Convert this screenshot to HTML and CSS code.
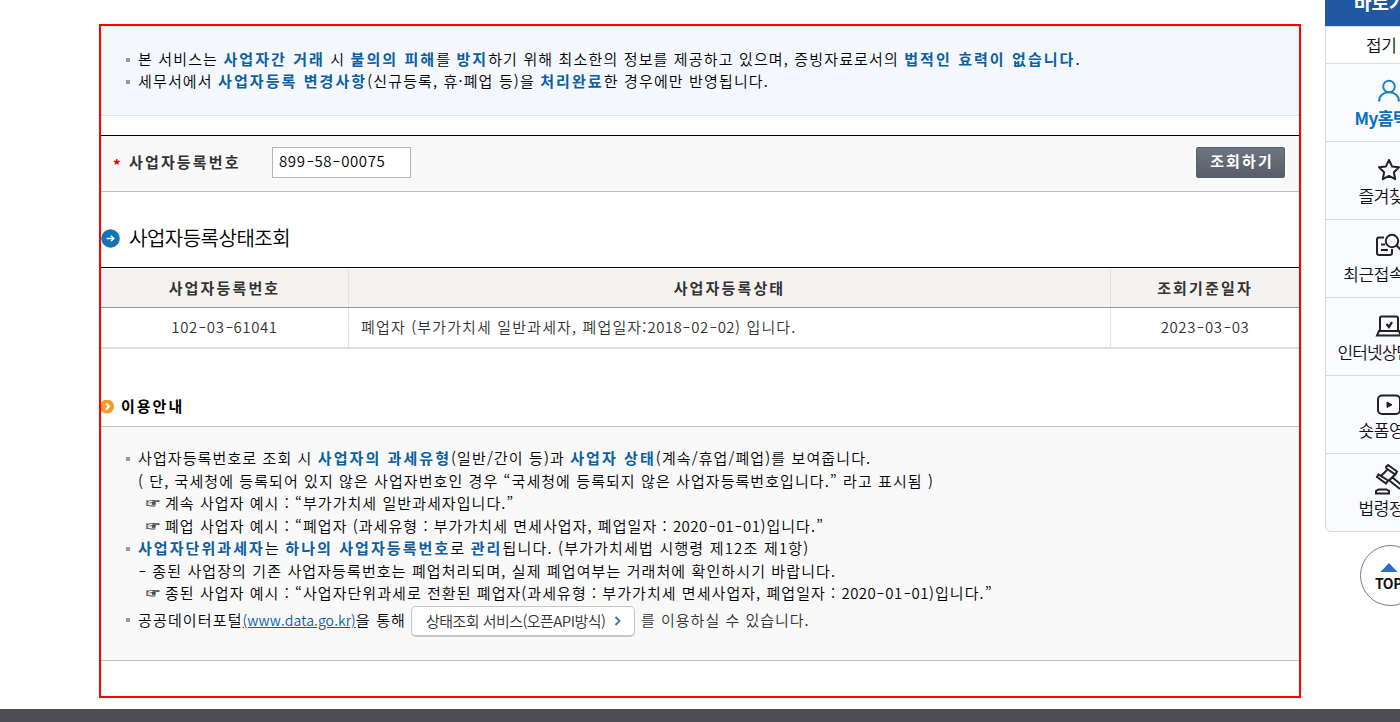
FILE: index.html
```html
<!DOCTYPE html>
<html lang="ko">
<head>
<meta charset="utf-8">
<title>사업자등록상태조회</title>
<link rel="stylesheet" href="styles.css">
</head>
<body>
<div class="page">
  <main class="frame">
    <ul class="notice">
      <li class="line bullet n1">본 서비스는 <b>사업자간 거래</b> 시 <b>불의의 피해</b>를 <b>방지</b>하기 위해 최소한의 정보를 제공하고 있으며, 증빙자료로서의 <b>법적인 효력이 없습니다</b>.</li>
      <li class="line bullet n2">세무서에서 <b>사업자등록 변경사항</b>(신규등록, 휴·폐업 등)을 <b>처리완료</b>한 경우에만 반영됩니다.</li>
    </ul>
    <form class="search">
      <span class="star">*</span>
      <label class="label">사업자등록번호</label>
      <div class="field"><span class="num">899<i>-</i>58<i>-</i>00075</span></div>
      <button type="button" class="submit">조회하기</button>
    </form>
    <h2 class="title">
      <svg width="20" height="20" viewBox="0 0 20 20"><circle cx="9.500" cy="9.500" r="9.300" fill="#1673b5"/><path d="M5.500 9.500h7M9.800 6.700l3 2.800-3 2.800" fill="none" stroke="#fff" stroke-width="1.500"/></svg>
      <span>사업자등록상태조회</span>
    </h2>
    <div class="table">
      <div class="row head"><div>사업자등록번호</div><div>사업자등록상태</div><div>조회기준일자</div></div>
      <div class="row"><div><span class="num">102<i>-</i>03<i>-</i>61041</span></div><div class="state">폐업자 (부가가치세 일반과세자, 폐업일자:<span class="num">2018<i>-</i>02<i>-</i>02</span>) 입니다.</div><div><span class="num">2023<i>-</i>03<i>-</i>03</span></div></div>
    </div>
    <h3 class="subtitle">
      <svg width="14" height="14" viewBox="0 0 14 14"><circle cx="6" cy="6.500" r="7" fill="#f79a2b"/><path d="M5 3.500l3 3-3 3" fill="none" stroke="#fff" stroke-width="2"/></svg>
      <span>이용안내</span>
    </h3>
    <div class="guide">
      <div class="line bullet g1">사업자등록번호로 조회 시 <b>사업자의 과세유형</b>(일반/간이 등)과 <b>사업자 상태</b>(계속/휴업/폐업)를 보여줍니다.</div>
      <div class="line g2">( 단, 국세청에 등록되어 있지 않은 사업자번호인 경우 “국세청에 등록되지 않은 사업자등록번호입니다.” 라고 표시됨 )</div>
      <div class="line hand g3"><span class="point">☞</span>계속 사업자 예시 : “부가가치세 일반과세자입니다.”</div>
      <div class="line hand g4"><span class="point">☞</span>폐업 사업자 예시 : “폐업자 (과세유형 : 부가가치세 면세사업자, 폐업일자 : <span class="num">2020<i>-</i>01<i>-</i>01</span>)입니다.”</div>
      <div class="line bullet g5"><b>사업자단위과세자</b>는 <b>하나의 사업자등록번호</b>로 <b>관리</b>됩니다. (부가가치세법 시행령 제12조 제1항)</div>
      <div class="line g6"><i class="dash">-</i> 종된 사업장의 기존 사업자등록번호는 폐업처리되며, 실제 폐업여부는 거래처에 확인하시기 바랍니다.</div>
      <div class="line hand g7"><span class="point">☞</span>종된 사업자 예시 : “사업자단위과세로 전환된 폐업자(과세유형 : 부가가치세 면세사업자, 폐업일자 : <span class="num">2020<i>-</i>01<i>-</i>01</span>)입니다.”</div>
      <div class="line bullet api">
        <span class="portal">공공데이터포털<a>(www.data.go.kr)</a>을 통해</span>
        <button type="button" class="service"><span>상태조회 서비스(오픈API방식)</span><svg width="8" height="10" viewBox="0 0 8 10"><path d="M1.500 1l4 4-4 4" fill="none" stroke="#4479bd" stroke-width="2"/></svg></button>
        <span class="tail">를 이용하실 수 있습니다.</span>
      </div>
    </div>
  </main>
  <aside class="side">
    <div class="quick">바로가기</div>
    <div class="fold">접기</div>
    <div class="item my"><svg width="28" height="28" viewBox="0 0 28 28"><circle cx="14" cy="9.500" r="5.800"/><path d="M4 24.500c0-5.500 4.200-9.200 10-9.200s10 3.700 10 9.200"/></svg><span>My홈택스</span></div>
    <div class="item"><svg width="28" height="28" viewBox="0 0 28 28"><path stroke-linejoin="round" d="M14 5l3 6.400 7 .9-5.100 4.900 1.300 7-6.200-3.400-6.200 3.400 1.300-7L4 12.300l7-.9z"/></svg><span>즐겨찾기</span></div>
    <div class="item"><svg width="28" height="28" viewBox="0 0 28 28"><path d="M9 4.500H4q-2 0-2 2V20q0 2 2 2h11q2 0 2-2v-4M6 11.500h4M6 17h7"/><circle cx="17" cy="8" r="6.200"/><path d="M21.500 12.500l6 6"/></svg><span>최근접속메뉴</span></div>
    <div class="item"><svg width="28" height="28" viewBox="0 0 28 28"><path d="M5 20V7q0-1.500 1.500-1.500h15Q23 5.500 23 7v13M4 20h20l2 4.500H2z"/><path d="M11.500 13l2.500 3 3-5" stroke-width="2.300"/></svg><span class="tight">인터넷상담사례</span></div>
    <div class="item"><svg width="28" height="28" viewBox="0 0 28 28"><rect x="3" y="6.500" width="22" height="18.500" rx="4"/><path d="M12 13v5.500l5-2.700z" fill="#222" stroke-width="1"/></svg><span>숏폼영상</span></div>
    <div class="item law"><svg width="28" height="32" viewBox="0 0 28 32"><path d="M11 4l2-2 9 6.500-1.500 3-9-6zM2 14l1.500-2.500 9.500 6-2 3zM12 7l-6 6M19.500 12l-6 6M17.500 14.500L29 24M15 18l10 8M1 30.500V28l2.500-1.500h8L14 28v2.500z"/></svg><span>법령정보</span></div>
    <a class="top"><svg width="18" height="9" viewBox="0 0 18 9"><path d="M9 0l8.500 9H.5z" fill="#2d6ccb"/></svg><span>TOP</span></a>
  </aside>
</div>
<footer class="footer"></footer>
</body>
</html>
```
FILE: styles.css
```css
* { box-sizing: border-box; }
body {
  margin: 0;
  width: 1400px;
  height: 722px;
  overflow: hidden;
  background: #fff;
  color: #000;
  font: 350 15px/22.5px "Noto Sans CJK KR", sans-serif;
}
ul, h2, h3 { margin: 0; padding: 0; list-style: none; }
i { font-style: normal; }
.page { display: flex; height: 709px; padding-left: 99px; overflow: hidden; }
.footer { height: 13px; background: #4d4c54; }
.frame {
  flex: none;
  width: 1202px;
  height: 674px;
  margin-top: 24px;
  border: 2px solid #f00;
}

.notice {
  height: 90px;
  padding: 21px 0 0 37px;
  background: #f4f7fc;
  border-top: 1px solid #e0e5eb;
  border-bottom: 1px solid #e0e5eb;
}
.line { position: relative; height: 22.5px; letter-spacing: 1.14px; white-space: nowrap; }
.notice .line { height: 22px; line-height: 22px; }
.line b { color: #0a5fa6; font-weight: 700; letter-spacing: 2.07px; }
.line.g1 { letter-spacing: 1.1px; }
.line.g2 { letter-spacing: 1.07px; }
.line.g5 { letter-spacing: 1.18px; }
.line.g6 { letter-spacing: 1.1px; }
.line.hand { padding-left: 7px; letter-spacing: 1.05px; }
.bullet::before {
  content: "";
  position: absolute;
  left: -12px;
  top: 10px;
  width: 4px;
  height: 4px;
  background: #999;
}
.num { letter-spacing: .6px; }
.line .num, .state .num { letter-spacing: .45px; }
.num i, .dash { display: inline-block; width: 9px; text-align: center; letter-spacing: 0; transform: scaleX(1.5); }

.search {
  display: flex;
  align-items: center;
  height: 57px;
  margin-top: 19px;
  padding: 0 14px 2px 12px;
  background: #f9f9f9;
  border-top: 1px solid #000;
  border-bottom: 1px solid #bfbfbf;
}
.star { width: 16px; color: #d40000; font-weight: 700; line-height: 14px; padding-top: 5px; }
.label { width: 143px; color: #333; font-weight: 700; letter-spacing: 2.15px; }
.field {
  width: 139px;
  height: 31px;
  padding: 2px 6px;
  background: #fff;
  border: 1px solid #b5b5b5;
}
.submit {
  width: 89px;
  height: 31px;
  margin-left: auto;
  padding: 0 0 4px 3px;
  border: 1px solid #59606b;
  border-radius: 2px;
  background: linear-gradient(#6c7580, #585e69);
  color: #fff;
  font: 700 15px "Noto Sans CJK KR", sans-serif;
  letter-spacing: 2.1px;
}

.title { display: flex; align-items: center; gap: 8px; height: 75px; padding-top: 18px; font-size: 20px; font-weight: 350; letter-spacing: -.5px; }
.table { height: 82px; border-top: 1px solid #000; border-bottom: 2px solid #dedede; color: #333; }
.row { display: grid; grid-template-columns: 247px 762px 189px; height: 39px; line-height: 38px; text-align: center; }
.row > div + div { border-left: 1px solid #e2e2e2; }
.head { height: 40px; line-height: 38px; background: #f4f3f1; border-top: 1px solid #fff; border-bottom: 1px solid #979591; font-weight: 700; letter-spacing: 2.15px; }
.row .state { padding-left: 12px; text-align: left; letter-spacing: 1.14px; }

.subtitle { display: flex; align-items: center; gap: 6px; height: 77px; padding-top: 38px; font-size: 15px; letter-spacing: 2px; }
.guide {
  height: 235px;
  padding: 20px 0 0 37px;
  background: #f9f9f9;
  border-top: 1px solid #bfbfbf;
  border-bottom: 1px solid #bfbfbf;
}
.point { display: inline-block; width: 20px; font-family: "DejaVu Sans", sans-serif; font-size: 16px; line-height: 20px; letter-spacing: 0; -webkit-text-stroke: .1px #000; }
.api { display: flex; align-items: center; height: 31px; margin-top: 0; }
.api::before { top: 13px; }
.portal { width: 273px; }
.portal a { color: #0a5fa6; text-decoration: underline; font-size: 14px; letter-spacing: .1px; }
.service {
  display: flex;
  align-items: center;
  justify-content: space-between;
  width: 224px;
  height: 31px;
  margin-top: 3px;
  padding: 0 12px 1px 14px;
  border: 1px solid #c6c6c6;
  border-bottom-width: 2px;
  border-radius: 5px;
  background: #fff;
  color: #333;
  font: 350 15px "Noto Sans CJK KR", sans-serif;
  letter-spacing: -.55px;
}
.tail { margin-left: 6px; color: #333; letter-spacing: 1px; }

.side { flex: none; width: 128px; margin-left: 24px; color: #111; font-size: 17px; letter-spacing: -.4px; text-align: center; }
.quick { height: 26px; background: #2159a0; color: #fff; font-size: 19px; font-weight: 700; line-height: 3px; letter-spacing: 0; }
.fold { height: 38px; padding-left: 40px; border: 1px solid #dadde4; line-height: 36px; text-align: left; }
.item {
  display: flex;
  flex-direction: column;
  align-items: center;
  height: 78px;
  padding-top: 13px;
  background: #fafbff;
  border: 1px solid #d6d9e1;
  border-top: 0;
}
.item svg { display: block; flex: none; fill: none; stroke: #222; stroke-width: 2; }
.item span { line-height: 26px; }
.item .tight { letter-spacing: -.9px; }
.item.my { color: #0870bd; font-weight: 700; }
.item.my svg { stroke: #1c82c8; }
.item.law { padding-top: 9px; border-radius: 0 0 6px 6px; }
.top {
  display: flex;
  flex-direction: column;
  align-items: center;
  width: 61px;
  height: 61px;
  margin: 13px 0 0 35px;
  padding: 17px 4px 0 0;
  border: 1px solid #747b93;
  border-radius: 50%;
  font: 700 14px/22px "Noto Sans CJK KR", sans-serif;
}
```
